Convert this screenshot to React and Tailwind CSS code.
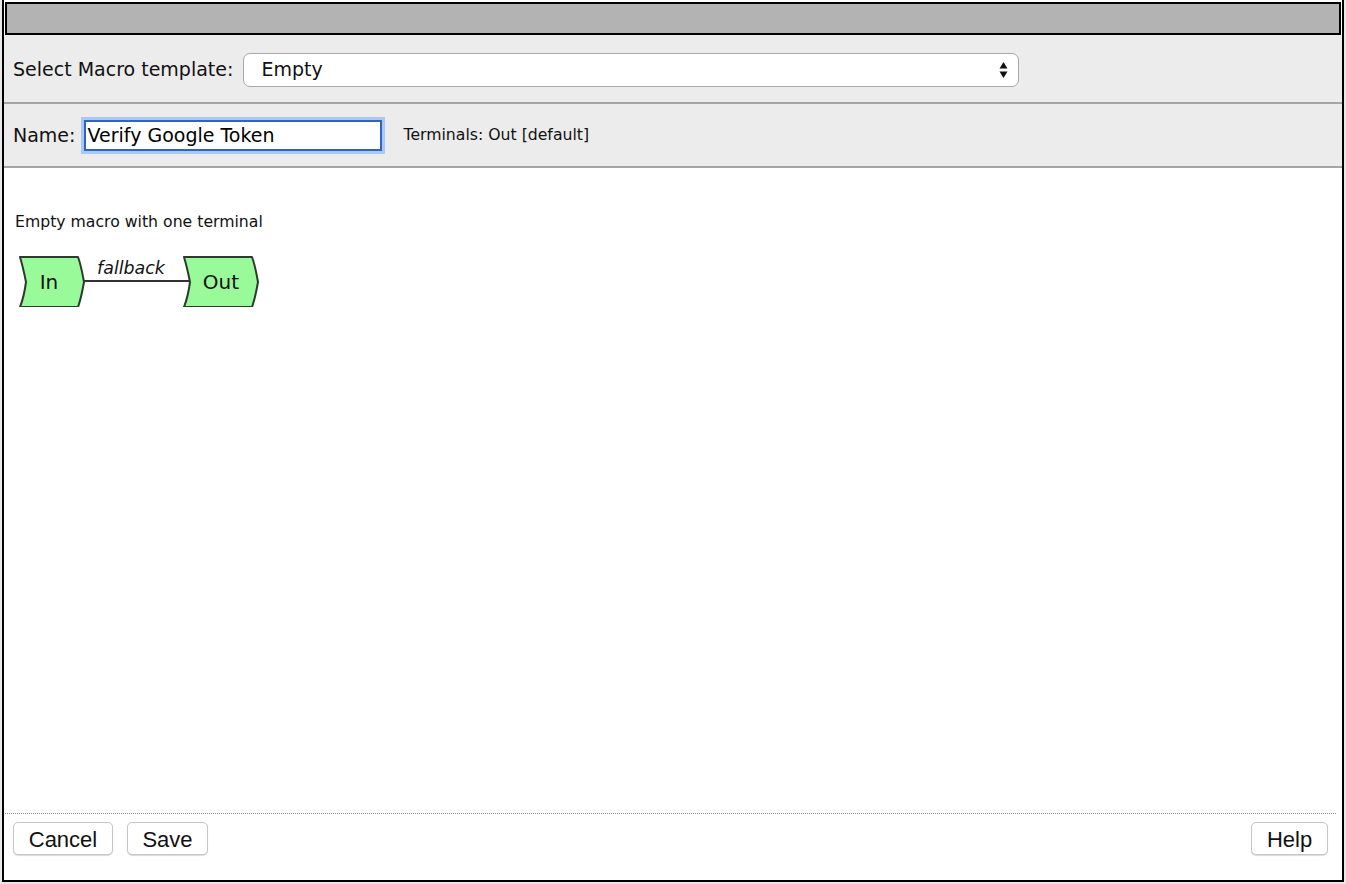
const uiFont = { fontFamily: '"DejaVu Sans", Verdana, sans-serif' };
const btnFont = { fontFamily: '"Liberation Sans", Arial, sans-serif' };

// chevron shaped terminal drawn as in the macro editor
const Terminal = ({ x, w, label, dx = 0 }) => {
    const y = 256, h = 50, m = y + h / 2;
    const d = `M${x} ${y} L${x + w - 6} ${y} Q${x + w - 3} ${y + 8} ${x + w} ${m} Q${x + w - 3} ${y + h - 8} ${x + w - 6} ${y + h} L${x} ${y + h} Q${x + 4} ${y + h - 10} ${x + 6} ${m} Q${x + 3} ${y + 10} ${x} ${y} Z`;
    return (<g>
        <path d={d} fill="#98fa98" stroke="#2e3a2e" strokeWidth="2" strokeLinejoin="round" />
        <text x={x + w / 2 + dx} y={m + 7} textAnchor="middle" fontSize="20" fill="#111" style={uiFont}>{label}</text>
    </g>)
}

const Button = ({ children, w }) => (
    <button className={`h-[33px] rounded-[5px] border border-[#c6c6c6] bg-white text-[22px] text-[#111] shadow-[0_1px_1px_rgba(0,0,0,0.15)] ${w}`} style={btnFont}>
        {children}
    </button>
)

const App = () => {
    return (<div className="w-[1346px] h-[884px] bg-[#e8e8e8] overflow-hidden">
        <div className="ml-[2px] w-[1342px] h-[882px] border-x-2 border-b-2 border-black bg-white flex flex-col text-[#111]" style={uiFont}>
            <div className="mx-[1px] mt-[2px] h-[33px] border-2 border-black bg-[#b3b3b3]"></div>

            <div className="h-[69px] bg-[#ececec] border-b-2 border-[#a5a5a5] flex items-center pl-[9px] pr-[2px] pt-[2px]">
                <label className="text-[19px]">Select Macro template:</label>
                <div className="ml-[10px] w-[776px] h-[34px] rounded-[7px] border border-[#a8a8a8] bg-white flex items-center pl-[17px] pr-[10px]">
                    <span className="text-[19px] flex-1">Empty</span>
                    <svg width="9" height="18" viewBox="0 0 9 18">
                        <path d="M4.5 1 L8.5 7.5 L0.5 7.5 Z" fill="#111" />
                        <path d="M4.5 17 L8.5 10.5 L0.5 10.5 Z" fill="#111" />
                    </svg>
                </div>
            </div>

            <div className="h-[64px] bg-[#ececec] border-b-2 border-[#a5a5a5] flex items-center pl-[9px] pr-[2px]">
                <label className="text-[19px]">Name:</label>
                <input defaultValue="Verify Google Token"
                    className="ml-[9px] w-[298px] h-[31px] border-2 border-[#2f64c4] bg-white px-[1px] text-[19px] text-black outline-none shadow-[0_0_0_3px_#a9c8f2]"
                    style={uiFont} />
                <span className="ml-[21px] text-[15.7px]">Terminals: Out [default]</span>
            </div>

            <div className="flex-1 flex flex-col">
                <div className="flex-1">
                    <p className="mt-[45px] ml-[11px] text-[15.7px] leading-[18px]">Empty macro with one terminal</p>
                    <svg width="280" height="70" viewBox="4 236 280 70" className="mt-[6px] block">
                        <line x1="84" y1="280" x2="189" y2="280" stroke="#333" strokeWidth="2" />
                        <text x="131" y="273" textAnchor="middle" fontSize="17.4" fontStyle="italic" fill="#111" style={uiFont}>fallback</text>
                        <Terminal x={20} w={64} label="In" dx={-3} />
                        <Terminal x={184} w={74} label="Out" />
                    </svg>
                </div>
                <div className="ml-[1px] mr-[6px] border-t border-dotted border-[#999]"></div>
                <div className="flex items-center pl-[9px] pr-[14px] pt-[8px] pb-[25px]">
                    <Button w="w-[100px]">Cancel</Button>
                    <div className="ml-[14px]"><Button w="w-[81px]">Save</Button></div>
                    <div className="ml-auto"><Button w="w-[77px]">Help</Button></div>
                </div>
            </div>
        </div>
    </div>)
}

export default App
